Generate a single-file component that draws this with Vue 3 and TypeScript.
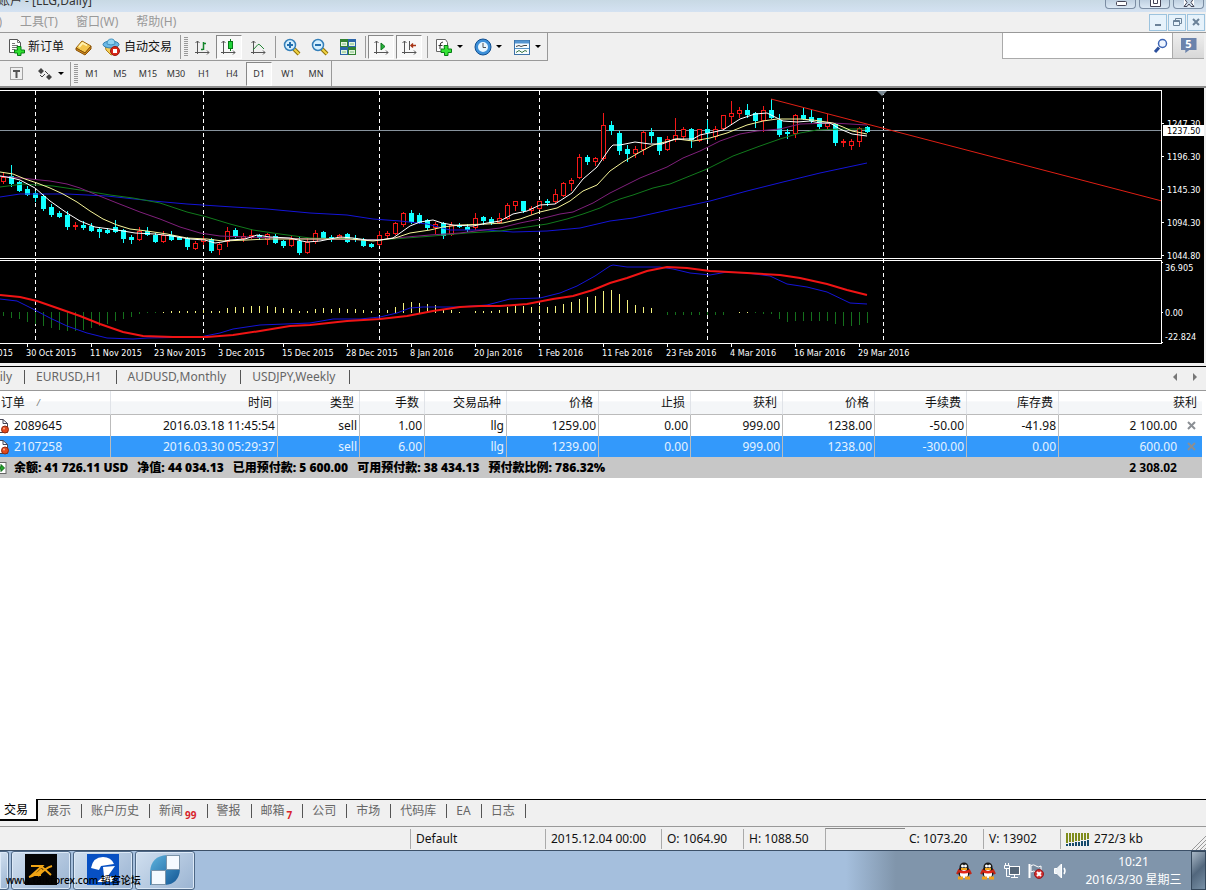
<script setup lang="ts">
import { ref } from 'vue'

type Candle = [kind: 'u' | 'd', high: number, top: number, bottom: number, low: number]

const candles: Candle[] = [
  ['u', 173, 177, 181, 183], ['d', 165, 176, 183, 186], ['d', 181, 182, 190, 191], ['d', 186, 189, 194, 195],
  ['d', 191, 193, 197, 201], ['d', 194, 196, 208, 210], ['d', 204, 207, 214, 216], ['d', 211, 213, 216, 217],
  ['d', 211, 215, 226, 229], ['u', 222, 225, 226, 229], ['d', 221, 225, 227, 229], ['d', 223, 226, 230, 231],
  ['d', 227, 229, 231, 237], ['d', 228, 230, 232, 233], ['d', 220, 227, 231, 232], ['d', 229, 230, 238, 242],
  ['d', 235, 237, 239, 243], ['u', 227, 231, 239, 240], ['d', 227, 231, 234, 235], ['d', 233, 235, 241, 242],
  ['u', 231, 235, 241, 242], ['d', 231, 235, 239, 240], ['d', 236, 237, 239, 239], ['d', 237, 238, 246, 249],
  ['u', 241, 243, 248, 249], ['u', 236, 239, 241, 244], ['d', 238, 239, 250, 252], ['u', 243, 244, 249, 254],
  ['u', 227, 231, 241, 246], ['d', 228, 230, 236, 237], ['u', 233, 236, 238, 241], ['u', 229, 235, 237, 238],
  ['d', 234, 235, 237, 239], ['u', 233, 234, 239, 244], ['d', 234, 236, 242, 243], ['d', 240, 241, 245, 247],
  ['u', 235, 239, 245, 246], ['d', 237, 241, 252, 254], ['u', 238, 242, 252, 253], ['u', 230, 233, 241, 243],
  ['d', 231, 232, 237, 237], ['d', 235, 237, 239, 241], ['u', 234, 235, 237, 238], ['d', 233, 234, 241, 242],
  ['d', 235, 238, 239, 241], ['d', 238, 239, 245, 246], ['d', 243, 244, 246, 247], ['u', 231, 235, 244, 245],
  ['u', 231, 233, 235, 238], ['u', 222, 223, 233, 234], ['u', 212, 213, 224, 226], ['d', 210, 213, 221, 223],
  ['d', 213, 215, 222, 223], ['d', 219, 220, 227, 229], ['u', 222, 224, 227, 233], ['d', 222, 223, 235, 238],
  ['u', 222, 225, 234, 235], ['d', 223, 225, 226, 227], ['d', 224, 227, 229, 231], ['u', 213, 218, 227, 229],
  ['d', 216, 217, 220, 224], ['d', 217, 219, 222, 224], ['u', 213, 218, 222, 223], ['u', 203, 205, 218, 219],
  ['u', 201, 201, 205, 210], ['d', 201, 201, 210, 212], ['u', 206, 208, 210, 214], ['u', 201, 201, 208, 209],
  ['d', 199, 201, 202, 205], ['u', 189, 194, 201, 203], ['u', 182, 183, 195, 196], ['u', 178, 180, 183, 190],
  ['u', 154, 157, 177, 178], ['d', 155, 157, 161, 164], ['u', 157, 158, 161, 165], ['u', 113, 125, 158, 160],
  ['d', 121, 125, 130, 134], ['d', 131, 133, 150, 154], ['d', 145, 149, 153, 161], ['u', 146, 149, 153, 157],
  ['u', 131, 132, 149, 154], ['d', 128, 132, 135, 142], ['d', 137, 137, 150, 154], ['u', 136, 139, 149, 150],
  ['u', 118, 135, 139, 141], ['u', 127, 129, 136, 139], ['d', 128, 129, 139, 147], ['u', 129, 129, 140, 141],
  ['d', 120, 129, 132, 139], ['u', 126, 129, 136, 139], ['u', 115, 115, 128, 129], ['u', 101, 113, 116, 123],
  ['u', 107, 110, 113, 117], ['d', 104, 110, 114, 117], ['d', 112, 113, 120, 127], ['u', 106, 110, 120, 131],
  ['d', 99, 110, 117, 118], ['d', 114, 120, 134, 136], ['d', 129, 132, 133, 138], ['u', 114, 115, 133, 137],
  ['d', 108, 115, 118, 119], ['d', 110, 117, 120, 122], ['d', 118, 118, 126, 128], ['u', 114, 123, 126, 128],
  ['d', 123, 124, 142, 145], ['u', 139, 141, 142, 146], ['u', 139, 141, 145, 149], ['u', 127, 128, 141, 146],
  ['d', 126, 127, 131, 132],
]

const histogram: number[] = [
  -4, -6, -7, -10, -12, -14, -16, -18, -19, -19, -18, -16, -14, -12, -9, -7, -5, -2, -1, -1,
  1, 2, 2, 2, 2, 3, 2, 2, 5, 6, 6, 7, 7, 7, 6, 5, 4, 2, 2, 4, 5, 4, 5, 4, 4, 3, 2, 3, 3, 6, 10, 11, 10, 9, 8, 4, 3, 1, 0,
  2, 2, 2, 3, 6, 8, 7, 6, 7, 6, 7, 9, 11, 14, 16, 17, 22, 23, 19, 13, 8, 6, 5, 0,
  -3, -3, -3, -3, -3, -3, -3, -3, 0, 1, 1, -1, -2, -2, -7, -10, -9, -9, -9, -9, -9, -12, -14, -14, -13, -11,
]

const barX = (i: number): number => 3 + i * 8

const averages: { name: string; points: string }[] = [
  { name: 'blue', points: '0,197 20,194 67,194 107,196 153,201 187,204 233,207 267,209 310,213 347,215 373,219 400,221 427,224 450,230 487,230 513,232 547,231 580,228 610,221 633,218 673,209 710,201 747,191 783,182 820,173 867,163' },
  { name: 'green', points: '0,187 23,184 53,186 80,190 110,195 133,198 160,203 187,212 207,217 230,224 253,230 280,234 310,238 350,239 380,240 433,236 467,233 500,231 527,227 547,224 567,219 583,214 600,208 610,203 620,199 633,195 653,188 670,184 707,169 733,156 760,146 780,139 800,133 817,130 840,129 867,129' },
  { name: 'purple', points: '0,176 30,179 50,181 67,184 80,188 97,195 117,203 140,212 160,219 180,227 200,233 220,236 247,237 310,239 380,240 395,238 430,235 460,233 500,228 520,223 540,219 560,214 573,212 593,203 610,193 620,188 640,178 667,167 683,158 700,151 720,141 740,134 757,131 780,129 800,124 833,123 867,125' },
  { name: 'yellow', points: '0,172 13,174 25,179 37,183 50,188 63,194 77,202 90,211 103,219 117,225 130,229 147,231 167,234 187,238 207,239 223,241 247,240 267,239 290,239 320,239 350,239 373,241 395,238 410,233 430,230 443,227 460,225 487,224 503,223 520,219 540,212 557,208 570,201 583,191 597,185 610,171 623,162 640,152 653,145 677,139 693,141 710,138 727,133 747,125 763,121 777,119 800,119 813,120 833,123 843,127 852,131 867,134' },
  { name: 'white', points: '0,176 12,178 20,180 35,188 50,201 67,213 80,221 95,227 110,229 123,231 135,233 155,234 172,236 190,239 205,240 215,243 222,242 230,240 245,239 257,235 270,237 290,238 302,241 307,242 320,241 340,237 353,238 367,240 380,240 393,238 410,226 420,222 433,220 442,223 453,225 473,226 487,223 500,221 513,214 527,211 540,205 555,204 572,193 583,179 597,167 610,148 613,145 620,145 635,142 650,144 662,144 675,139 693,139 700,135 723,130 740,119 755,114 767,113 775,117 783,121 797,122 810,121 820,123 830,123 840,129 852,134 867,136' },
]

const macdSignal = '0,295 20,297 37,301 60,309 80,316 100,324 123,332 143,336 173,337 207,337 233,335 260,331 290,326 310,325 347,321 380,319 407,316 433,311 460,307 480,306 500,306 527,304 553,299 573,296 593,290 610,283 627,278 647,271 667,267 687,268 710,271 747,273 780,275 800,278 827,284 847,290 867,295'
const macdMain = '0,299 17,301 33,309 50,318 67,326 87,333 107,338 133,339 147,338 200,337 220,333 233,329 260,325 310,323 333,319 360,319 380,317 397,313 410,308 423,307 457,307 487,305 510,299 540,298 560,293 577,286 595,276 610,266 613,265 627,267 660,267 673,269 690,273 710,275 727,272 747,273 770,276 787,284 807,287 827,292 850,303 867,304'

const separators = [35, 203, 379, 539, 707, 883]
const dates = ['30 Oct 2015', '11 Nov 2015', '23 Nov 2015', '3 Dec 2015', '15 Dec 2015', '28 Dec 2015', '8 Jan 2016',
  '20 Jan 2016', '1 Feb 2016', '11 Feb 2016', '23 Feb 2016', '4 Mar 2016', '16 Mar 2016', '29 Mar 2016']
const priceScale = [
  { y: 123, text: '1247.30' }, { y: 156, text: '1196.30' }, { y: 189, text: '1145.30' },
  { y: 222, text: '1094.30' }, { y: 255, text: '1044.80' },
]
const macdScale = [{ y: 267, text: '36.905' }, { y: 312, text: '0.00' }, { y: 336, text: '-22.824' }]

const frames = ['M1', 'M5', 'M15', 'M30', 'H1', 'H4', 'D1', 'W1', 'MN']
const frame = ref('D1')
const symbols = ['EURUSD,H1', 'AUDUSD,Monthly', 'USDJPY,Weekly']

const columns = ['时间', '类型', '手数', '交易品种', '价格', '止损', '获利', '价格', '手续费', '库存费']
const orders = [
  { id: '2089645', cells: ['2016.03.18 11:45:54', 'sell', '1.00', 'llg', '1259.00', '0.00', '999.00', '1238.00', '-50.00', '-41.98'], profit: '2 100.00' },
  { id: '2107258', cells: ['2016.03.30 05:29:37', 'sell', '6.00', 'llg', '1239.00', '0.00', '999.00', '1238.00', '-300.00', '0.00'], profit: '600.00' },
]
const selected = ref('2107258')
const totals = ['余额: 41 726.11 USD', '净值: 44 034.13', '已用预付款: 5 600.00', '可用预付款: 38 434.13', '预付款比例: 786.32%']

const panels: { name: string; count?: string }[] = [
  { name: '交易' }, { name: '展示' }, { name: '账户历史' }, { name: '新闻', count: '99' }, { name: '警报' },
  { name: '邮箱', count: '7' }, { name: '公司' }, { name: '市场' }, { name: '代码库' }, { name: 'EA' }, { name: '日志' },
]
const panel = ref('交易')
const query = ref('')
</script>

<template>
  <div class="app">
    <header class="titlebar">
      <div class="title">账户 - [LLG,Daily]</div>
      <div class="winbtns">
        <button aria-label="最小化"><svg width="14" height="10"><rect x="2.500" y="1.500" width="10" height="4" rx="1" /></svg></button>
        <button aria-label="最大化"><svg width="14" height="10"><path d="M2.500 -2V6.500H12.500V-2M5.500 -1V3.500H9.500V-1" /></svg></button>
        <button aria-label="关闭"><svg width="14" height="10"><path d="M2 6.500L5 2.500L2 -2M12 6.500L9 2.500L12 -2M2 6.500H5L7 4L9 6.500H12" /></svg></button>
      </div>
    </header>

    <nav class="menu">
      <button class="cut">)</button>
      <button>工具(T)</button>
      <button>窗口(W)</button>
      <button>帮助(H)</button>
      <div class="mdi">
        <button aria-label="最小化图表"><svg width="16" height="14"><path d="M5 10H11" stroke-width="2" /></svg></button>
        <button aria-label="还原图表"><svg width="16" height="14"><path d="M6.500 5V3.500H12.500V8.500H11M4.500 5.500H10.500V10.500H4.500ZM4.500 6.500H10.500" /></svg></button>
        <button aria-label="关闭图表"><svg width="16" height="14"><path d="M5 4L11 10M11 4L5 10" stroke-width="2" /></svg></button>
      </div>
    </nav>

    <section class="tools">
      <div class="bars">
        <div class="bar main">
          <button class="neworder">
            <svg width="18" height="18"><path d="M1.500 1.500H9.500L12.500 4.500V14.500H1.500Z" fill="#fff" stroke="#555" /><path d="M9.500 1.500V4.500H12.500M4 5.500H7M4 7.500H10M4 9.500H9M4 11.500H7" stroke="#777" fill="none" /><path d="M9 8.500H13V12H16.500V15H13V17.500H9.500V15H6.500V12H9.500Z" fill="#2fe02f" stroke="#087c16" /></svg>
            新订单
          </button>
          <button class="slot" aria-label="元编辑器">
            <svg width="18" height="18"><path d="M1 10L7 3L16 8L10 15Z" fill="#f3c54c" stroke="#99620b" /><path d="M1 10L10 15L16 8V11L10 17L1 12Z" fill="#d18b19" stroke="#89530b" /><path d="M4 9L7.500 5L12 7.500" stroke="#fff0ad" stroke-width="2" fill="none" /></svg>
          </button>
          <button class="auto">
            <svg width="20" height="18"><path d="M3 7L15 9V15L9 17L4 12Z" fill="#f4cc57" stroke="#ae8118" /><ellipse cx="9" cy="6.500" rx="8" ry="3.500" fill="#6bb8e7" stroke="#337fae" /><path d="M5 6Q5 1 9.500 1Q13 1 13 6Q9 8 5 6" fill="#91d3f3" stroke="#4191bd" /><circle cx="13" cy="13" r="4.500" fill="#d92517" stroke="#991a0d" /><rect x="11" y="11" width="4" height="4" fill="#fff" /></svg>
            自动交易
          </button>
          <i class="edge" /><i class="grip" />
          <button class="slot" aria-label="柱状图"><svg width="18" height="18"><path d="M4.500 3V16M2 14.500H16M2.500 5L4.500 3L6.500 5M14 12.500L16 14.500L14 16.500" class="axis" /><path d="M10.500 4V12M8 11.500H10M11 5.500H13" stroke="#12852a" stroke-width="1.500" /></svg></button>
          <button class="slot on" aria-label="蜡烛图"><svg width="18" height="18"><path d="M3.500 3V16M1 14.500H15M1.500 5L3.500 3L5.500 5M13 12.500L15 14.500L13 16.500" class="axis" /><path d="M10.500 1V13" stroke="#087918" /><rect x="8.500" y="3.500" width="4" height="7" fill="#20d43a" stroke="#087918" /></svg></button>
          <button class="slot" aria-label="折线图"><svg width="18" height="18"><path d="M4.500 3V16M2 14.500H16M2.500 5L4.500 3L6.500 5M14 12.500L16 14.500L14 16.500" class="axis" /><path d="M4 12L9 6.500Q10 6 11 7L15 11" stroke="#238635" fill="none" /></svg></button>
          <i class="sep" />
          <button class="slot" aria-label="放大"><svg width="18" height="18"><path d="M11 11L16 16" stroke="#8e7108" stroke-width="4" /><path d="M11 11L16 16" stroke="#f1d445" stroke-width="2" /><circle cx="7" cy="7" r="5.500" fill="#d5f0ff" stroke="#347fb9" stroke-width="1.500" /><path d="M4 7H10M7 4V10" stroke="#246fae" stroke-width="2" /></svg></button>
          <button class="slot" aria-label="缩小"><svg width="18" height="18"><path d="M11 11L16 16" stroke="#8e7108" stroke-width="4" /><path d="M11 11L16 16" stroke="#f1d445" stroke-width="2" /><circle cx="7" cy="7" r="5.500" fill="#d5f0ff" stroke="#347fb9" stroke-width="1.500" /><path d="M4 7H10" stroke="#246fae" stroke-width="2" /></svg></button>
          <button class="slot" aria-label="平铺窗口"><svg width="18" height="18"><rect x="1" y="1" width="8" height="8" fill="#318232" /><rect x="9" y="1" width="8" height="8" fill="#2c66aa" /><rect x="1" y="9" width="8" height="8" fill="#2c66aa" /><rect x="9" y="9" width="8" height="8" fill="#318232" /><path d="M2 4H8V8H2ZM10 4H16V8H10ZM2 12H8V16H2ZM10 12H16V16H10Z" fill="#e5f5df" /><path d="M3 6H7M11 6H15M3 14H7M11 14H15" stroke="#7fbb80" /></svg></button>
          <i class="sep" />
          <button class="slot on" aria-label="自动滚动"><svg width="18" height="18"><path d="M4.500 3V16M2 14.500H16M2.500 5L4.500 3L6.500 5M14 12.500L16 14.500L14 16.500" class="axis" /><path d="M9 5L13 8.500L9 12Z" fill="#23b43a" stroke="#10751e" /></svg></button>
          <button class="slot on" aria-label="图表平移"><svg width="18" height="18"><path d="M4.500 3V16M2 14.500H16M2.500 5L4.500 3L6.500 5M14 12.500L16 14.500L14 16.500M9.500 3V12" class="axis" /><path d="M11 7.500H16M13 5.500L11 7.500L13 9.500" stroke="#a73516" stroke-width="1.500" fill="none" /></svg></button>
          <i class="sep" />
          <button class="drop" aria-label="指标"><svg width="18" height="18"><path d="M1.500 1.500H10.500L12.500 4.500V13.500H1.500Z" fill="#fff" stroke="#666" /><path d="M8 4Q5 4 5 8V11M3.500 7.500H7.500" stroke="#333" fill="none" /><path d="M9 7.500H13V11H16.500V14.500H13V17.500H9.500V14.500H6V11H9.500Z" fill="#34e334" stroke="#087c16" /></svg><i class="arrow" /></button>
          <button class="drop" aria-label="周期"><svg width="18" height="18"><circle cx="9" cy="9" r="6.500" fill="#e9f7ff" stroke="#3c8fd8" stroke-width="3" /><circle cx="9" cy="9" r="8" fill="none" stroke="#114f90" /><path d="M9 5V9.500H12" stroke="#555" fill="none" /></svg><i class="arrow" /></button>
          <button class="drop" aria-label="模板"><svg width="18" height="18"><rect x="1.500" y="2.500" width="15" height="14" fill="#f7fcff" stroke="#3d72a8" /><path d="M2 4H16" stroke="#5595d0" stroke-width="3" /><path d="M2 10.500H16" stroke="#5792c3" /><path d="M3 8.500L6 7.500L8 8.500L11 7.500H14" stroke="#444" fill="none" /><path d="M3 14.500L6 12.500L9 14.500L12 12.500L14 13.500" stroke="#397642" fill="none" /></svg><i class="arrow" /></button>
        </div>
        <div class="bar frames">
          <button class="text" aria-label="文本标签"><svg width="14" height="14"><rect x="0.500" y="0.500" width="12" height="12" fill="none" stroke="#555" stroke-dasharray="1 1" /><path d="M3 4H10M6.500 4V11" stroke="#555" stroke-width="2" /></svg></button>
          <button class="drop" aria-label="箭头"><svg width="18" height="18"><path d="M2 6L5 3L8 6L5 9ZM10 12L13 9L16 12L13 15Z" fill="#444" /><path d="M4 10L6 12L9 9M9 6L12 9" stroke="#444" fill="none" /></svg><i class="arrow" /></button>
          <i class="edge" /><i class="grip" />
          <button v-for="f in frames" :key="f" class="slot tf" :class="{ on: f === frame }" @click="frame = f">{{ f }}</button>
        </div>
      </div>
      <div class="search">
        <input v-model="query" type="text" aria-label="搜索" />
        <button class="find" aria-label="查找"><svg width="16" height="16"><path d="M2 14L6 9.500" stroke="#2b4f9c" stroke-width="3" /><circle cx="9.500" cy="5.500" r="4" fill="#eef5ff" stroke="#3d65b5" stroke-width="1.500" /></svg></button>
        <button class="chat" aria-label="消息"><span>5</span></button>
      </div>
    </section>

    <section class="chart">
      <svg class="plot" height="275" role="img" aria-label="LLG 日线图">
        <g transform="translate(0 -88)">
          <g shape-rendering="crispEdges">
            <line x1="0" x2="100%" y1="130.500" y2="130.500" stroke="#87939d" />
            <line v-for="x in separators" :key="x" :x1="x + 0.5" :x2="x + 0.5" y1="91" y2="343" stroke="#fff" stroke-dasharray="4 3" />
            <g v-for="(c, i) in candles" :key="i" :class="c[0]">
              <path :d="`M${barX(i) + 0.5} ${c[1]}V${c[2]}M${barX(i) + 0.5} ${c[3]}V${c[4] + 1}`" />
              <rect :x="barX(i) - 1.5" :y="c[2] + 0.5" width="4" :height="Math.max(1, c[3] - c[2])" />
            </g>
            <rect v-for="(h, i) in histogram" :key="i" :x="barX(i)" :y="h > 0 ? 313 - h : 312" width="1" :height="Math.abs(h)" :class="h > 0 ? 'pos' : 'neg'" />
          </g>
          <polyline v-for="a in averages" :key="a.name" :points="a.points" :class="a.name" class="ma" />
          <polyline :points="macdMain" class="ma blue" />
          <polyline :points="macdSignal" class="signal" />
          <line x1="771" y1="99" x2="1932" y2="402" stroke="#df1f14" clip-path="url(#upper)" />
          <clipPath id="upper"><rect x="0" y="91" width="100%" height="167" /></clipPath>
          <path d="M877 91H887L882 96Z" fill="#788791" />
          <g shape-rendering="crispEdges" stroke="#fff">
            <line x1="0" x2="100%" y1="90.500" y2="90.500" />
            <line x1="0" x2="100%" y1="258.500" y2="258.500" />
            <line x1="0" x2="100%" y1="260.500" y2="260.500" />
            <line x1="0" x2="100%" y1="343.500" y2="343.500" />
            <line v-for="(d, i) in dates" :key="d" :x1="27.5 + i * 64" :x2="27.5 + i * 64" y1="344" y2="347" />
          </g>
          <text x="13" y="356" text-anchor="end">2015</text>
          <text v-for="(d, i) in dates" :key="d" :x="26 + i * 64" y="356">{{ d }}</text>
        </g>
      </svg>
      <svg class="scale" width="43" height="275" role="img" aria-label="价格刻度">
        <g transform="translate(0 -88)">
          <path d="M0.500 90V258.500M0.500 260V344" stroke="#fff" shape-rendering="crispEdges" />
          <g v-for="p in priceScale" :key="p.text">
            <path :d="`M1 ${p.y + 0.5}H3`" stroke="#fff" /><text x="6" :y="p.y + 4">{{ p.text }}</text>
          </g>
          <text v-for="m in macdScale" :key="m.text" x="4" :y="m.y + 4">{{ m.text }}</text>
          <path d="M1 262.500H2M1 312.500H2M1 342.500H2" stroke="#fff" />
          <rect x="2" y="125" width="41" height="11" fill="#fff" />
          <text x="6" y="134" class="now">1237.50</text>
        </g>
      </svg>
    </section>

    <nav class="symbols">
      <button class="cut">LLG,Daily</button>
      <button v-for="s in symbols" :key="s">{{ s }}</button>
      <span class="scroll">
        <button aria-label="向左"><svg width="5" height="8"><path d="M4 0V8L0 4Z" fill="#777" /></svg></button>
        <button aria-label="向右"><svg width="5" height="8"><path d="M1 0V8L5 4Z" fill="#777" /></svg></button>
      </span>
    </nav>

    <main class="terminal">
      <table>
        <colgroup>
          <col class="w-id" /><col class="w-time" /><col class="w-m" /><col class="w-s" /><col class="w-m" />
          <col v-for="n in 6" :key="n" class="w-l" /><col />
        </colgroup>
        <thead>
          <tr>
            <th class="id"><span class="order">订单 <i>/</i></span></th>
            <th v-for="(c, i) in columns" :key="i">{{ c }}</th>
            <th>获利</th>
          </tr>
        </thead>
        <tbody>
          <tr v-for="o in orders" :key="o.id" :class="{ sel: o.id === selected }" @click="selected = o.id">
            <td class="id">
              <span><svg width="14" height="16"><path d="M-4 1.500H3L7.500 5.500V14.500H-4Z" fill="#fff" stroke="#445" /><path d="M3 1.500V5.500H7.500" fill="none" stroke="#445" /><circle cx="5" cy="11.500" r="3.500" fill="#e2491c" stroke="#8f2a10" /><circle cx="4" cy="10.500" r="1" fill="#ffb08c" /></svg>{{ o.id }}</span>
            </td>
            <td v-for="(c, i) in o.cells" :key="i">{{ c }}</td>
            <td class="profit">
              <span>{{ o.profit }}<button aria-label="平仓"><svg width="9" height="9"><path d="M1 1L8 8M8 1L1 8" stroke="#8b8f94" stroke-width="2" /></svg></button></span>
            </td>
          </tr>
        </tbody>
        <tfoot>
          <tr>
            <td colspan="11" class="id">
              <span><svg width="14" height="14"><rect x="-4" y="1.500" width="10" height="11" fill="#fff" stroke="#666" /><path d="M-1 6H1V3.500L4.500 7L1 10.500V8H-1Z" fill="#23a82b" stroke="#0c6815" /></svg><b v-for="t in totals" :key="t">{{ t }}</b></span>
            </td>
            <td class="sum">2 308.02</td>
          </tr>
        </tfoot>
      </table>
    </main>

    <nav class="panels">
      <button v-for="p in panels" :key="p.name" :class="{ active: p.name === panel }" @click="panel = p.name">{{ p.name }}<sub v-if="p.count">{{ p.count }}</sub></button>
      <span class="rest" />
    </nav>

    <footer class="status">
      <span class="s-help" />
      <span class="s-profile">Default</span>
      <span class="s-date">2015.12.04 00:00</span>
      <span class="s-o">O: 1064.90</span>
      <span class="s-o">H: 1088.50</span>
      <span class="s-l" />
      <span class="s-c">C: 1073.20</span>
      <span class="s-v">V: 13902</span>
      <span class="s-net">
        <svg width="24" height="13"><path v-for="n in 8" :key="n" :d="`M${n * 3 - 2} 0V${10 - Math.floor(n / 2)}`" stroke="#7f8c1c" stroke-width="2" /><path v-for="n in 8" :key="n" :d="`M${n * 3 - 2} ${11 - Math.floor(n / 2)}V13`" stroke="#164a6c" stroke-width="2" /></svg>
        272/3 kb
      </span>
      <svg class="resize" width="14" height="14"><path d="M0 14L14 0M4 14L14 4M8 14L14 8M12 14L14 12" stroke="#999" /></svg>
    </footer>

    <footer class="taskbar">
      <div class="tasks">
        <button class="stub" aria-label="任务" />
        <button aria-label="ZX"><svg width="32" height="31"><rect width="32" height="31" fill="#050505" /><path d="M6 12H17L7 21H16M16 12L26 21M27 12Q20 14 13 22M4 23Q12 21 17 15" stroke="#f0a414" stroke-width="2" fill="none" /></svg></button>
        <button aria-label="迅投"><svg width="32" height="31"><rect width="32" height="31" fill="#0750c3" /><path d="M4 14Q6 3 16 3Q24 3 27 10L14 12L12 16ZM16 13L28 12L21 22L27 23L25 28H10L17 22Z" fill="#fff" /></svg></button>
        <button aria-label="宽带"><svg width="32" height="32"><defs><linearGradient id="leaf" x2="1" y2="1"><stop stop-color="#5fb4de" /><stop offset="1" stop-color="#125594" /></linearGradient></defs><path d="M1 31V18Q2 2 18 1H31V15Q30 30 16 31Z" fill="url(#leaf)" /><path d="M17.500 1.500H30.500V15.500H17.500ZM2.500 16.500H16.500V30.500H2.500Z" fill="#f5faff" stroke="#7b93a8" /></svg></button>
      </div>
      <div class="tray">
        <svg v-for="n in 2" :key="n" width="16" height="18"><ellipse cx="8" cy="10" rx="6" ry="6" fill="#171717" /><circle cx="8" cy="5" r="4.500" fill="#171717" /><ellipse cx="8" cy="12" rx="4" ry="4" fill="#fff" /><path d="M2 7Q8 11 14 7V10Q8 13 2 10Z" fill="#e22616" /><path d="M1 12L3 8M15 12L13 8" stroke="#c22616" stroke-width="2" /><circle cx="6.500" cy="4" r="1.500" fill="#fff" /><circle cx="9.500" cy="4" r="1.500" fill="#fff" /><path d="M5 7H11" stroke="#f5a61c" stroke-width="2" /><path d="M2 16H7M9 16H14" stroke="#f3a218" stroke-width="3" /></svg>
        <svg width="16" height="18"><rect x="5.500" y="4.500" width="10" height="8" fill="#566778" stroke="#fff" /><path d="M7 15.500H14M10.500 13V15M2.500 7V14.500H6M1.500 1V3M4.500 1V3M0.500 3.500H5.500V6.500H0.500Z" stroke="#fff" fill="none" /></svg>
        <svg width="16" height="18"><path d="M1.500 2V16" stroke="#fff" stroke-width="2" /><path d="M3 3.500Q6 2 8 4T13 4V10Q10 12 8 10T3 10Z" fill="#778ba0" stroke="#fff" /><circle cx="11" cy="12" r="4.500" fill="#d42c2c" stroke="#8c1f24" /><path d="M9 10L13 14M13 10L9 14" stroke="#fff" stroke-width="2" /></svg>
        <svg width="16" height="18"><path d="M2.500 6.500H5L9.500 2V16L5 11.500H2.500Z" fill="#eaf0f5" stroke="#fff" /><path d="M12 6Q14 9 12 12" stroke="#fff" stroke-width="1.500" fill="none" /></svg>
        <div class="clock"><time>10:21</time><time>2016/3/30 星期三</time></div>
        <button class="desktop" aria-label="显示桌面" />
      </div>
      <span class="watermark">www.talkforex.com 韬客论坛</span>
    </footer>
  </div>
</template>

<style>
body {
  margin: 0;
  background: #f0f0f0;
}
</style>

<style scoped>
.app {
  display: flex;
  flex-direction: column;
  min-height: 100vh;
  overflow: hidden;
  background: #f0f0f0;
  color: #111;
  font: 12px/16px "Noto Sans", "Noto Sans CJK SC", sans-serif;
}
.app * { box-sizing: border-box; }
button {
  font: inherit;
  color: inherit;
  background: none;
  border: 0;
  padding: 0;
  white-space: nowrap;
}
svg { display: block; flex: none; }

.titlebar {
  display: flex;
  justify-content: space-between;
  height: 12px;
  overflow: hidden;
  background: linear-gradient(#c8d9e4, #d4e2f2);
}
.title {
  display: flex;
  justify-content: flex-end;
  width: 92px;
  margin-top: -7px;
  white-space: nowrap;
  color: #333;
}
.winbtns { display: flex; gap: 3px; padding-right: 2px; }
.winbtns button {
  display: flex;
  justify-content: center;
  width: 31px;
  height: 9px;
  border: 1px solid #7b8da3;
  border-top: 0;
  border-radius: 0 0 4px 4px;
  background: linear-gradient(#bfd0e0, #dbe8f4);
}
.winbtns svg { fill: #fff; stroke: #445; }

.menu {
  display: flex;
  align-items: center;
  gap: 18px;
  height: 21px;
  border-bottom: 1px solid #999;
  color: #999;
}
.menu .cut {
  display: flex;
  justify-content: flex-end;
  width: 2px;
  overflow: hidden;
}
.mdi { display: flex; gap: 1px; margin-left: auto; padding-right: 1px; }
.mdi button {
  width: 18px;
  height: 17px;
  border: 1px solid #9cc3de;
  background: #e6f2fb;
}
.mdi svg { fill: none; stroke: #6b8299; }

.tools {
  display: flex;
  justify-content: space-between;
  height: 55px;
  border-bottom: 2px solid #8d8d8d;
}
.bar { display: flex; align-items: center; color: #111; }
.bar.main {
  height: 28px;
  border-right: 1px solid #999;
  border-bottom: 1px solid #999;
}
.bar.frames { width: 332px; height: 25px; border-right: 1px solid #999; }
.bar button { display: flex; align-items: center; height: 24px; }
.neworder { width: 70px; padding-left: 8px; gap: 2px; }
.auto { width: 82px; padding-left: 4px; gap: 2px; }
.bar .slot { justify-content: center; width: 28px; }
.bar .drop { width: 39px; padding-left: 5px; gap: 4px; }
.bar .text { width: 31px; padding-left: 10px; }
.bar .slot.on {
  width: 26px;
  margin-right: 2px;
  border: 1px solid #fff;
  border-top-color: #888;
  border-left-color: #888;
  background: #f8f8f8;
}
.bar .tf { font-size: 9px; color: #333; }
.axis { stroke: #555; fill: none; }
.edge { width: 1px; height: 24px; background: #999; }
.grip {
  width: 4px;
  height: 20px;
  margin-left: 3px;
  background: repeating-linear-gradient(#999 0 1px, #f0f0f0 1px 2px);
}
.sep { width: 6px; height: 22px; border-left: 1px solid #999; margin-left: 3px; margin-right: -3px; }
.arrow {
  border: 3px solid transparent;
  border-top-color: #000;
  border-bottom: 0;
}
.search {
  display: flex;
  width: 204px;
  height: 26px;
  padding-right: 2px;
}
.search input {
  flex: 1;
  min-width: 0;
  height: 26px;
  border: 1px solid #aaa;
  border-width: 0 0 1px 1px;
  border-radius: 0;
  background: #fff;
  outline: 0;
}
.find {
  width: 20px;
  background: #fff;
  border-right: 1px solid #aaa;
  border-bottom: 1px solid #aaa;
}
.chat {
  display: flex;
  align-items: center;
  justify-content: center;
  width: 31px;
  border-bottom: 1px solid #aaa;
  background: linear-gradient(#eee, #d8d8d8);
}
.chat span {
  width: 16px;
  height: 15px;
  background: #6b83ac;
  color: #fff;
  font-weight: 700;
  font-size: 11px;
  line-height: 12px;
  clip-path: polygon(0 0, 100% 0, 100% 80%, 55% 80%, 30% 100%, 30% 80%, 0 80%);
}

.chart {
  display: flex;
  margin-right: 2px;
  background: #000;
}
.plot { flex: 1; min-width: 0; }
.chart text {
  fill: #fff;
  font: 9px "DejaVu Sans Condensed", "DejaVu Sans", sans-serif;
}
.chart .now { fill: #000; }
.u path, .u rect { stroke: #f51818; fill: #000; }
.d path, .d rect { stroke: #1ff; fill: #1ff; }
.pos { fill: #f7f480; }
.neg { fill: #14701c; }
.ma { fill: none; stroke-width: 1; }
.blue { stroke: #1414d8; }
.green { stroke: #117a1c; }
.purple { stroke: #80207c; }
.yellow { stroke: #f7f59a; }
.white { stroke: #fff; }
.signal { fill: none; stroke: #f01414; stroke-width: 2; }

.symbols {
  display: flex;
  align-items: center;
  height: 27px;
  padding-bottom: 6px;
  border-top: 1px solid #000;
  margin-top: 3px;
  color: #666;
}
.symbols > button {
  height: 14px;
  line-height: 14px;
  padding: 0 14px 0 11px;
  border-right: 1px solid #555;
}
.symbols > .cut {
  display: flex;
  justify-content: flex-end;
  width: 25px;
  padding: 0 12px 0 0;
  overflow: hidden;
}
.scroll { display: flex; gap: 14px; margin-left: auto; padding-right: 9px; }

.terminal {
  flex: 1;
  margin-top: -3px;
  padding-right: 4px;
  border-top: 1px solid #999;
  background: #fff;
}
table {
  width: 100%;
  table-layout: fixed;
  border-collapse: separate;
  border-spacing: 0;
}
.w-id { width: 111px; }
.w-time { width: 167px; }
.w-m { width: 82px; }
.w-s { width: 65px; }
.w-l { width: 92px; }
th {
  height: 24px;
  padding: 0 5px 0 0;
  border-bottom: 1px solid #bbb;
  border-right: 1px solid #e0e3e8;
  background: linear-gradient(#fff 0 45%, #f4f6f8 46%);
  font-weight: 400;
  text-align: right;
  white-space: nowrap;
}
td {
  height: 21px;
  padding: 0 2px 0 0;
  border-right: 1px solid #bbb;
  text-align: right;
  white-space: nowrap;
  overflow: hidden;
}
tr > :last-child { border-right: 0; }
.id { text-align: left; }
.id span { display: flex; align-items: center; }
th .order { width: 40px; justify-content: flex-end; }
th.id { padding: 0; }
.order i { margin-left: 12px; font-size: 9px; color: #777; }
.sel td { background: #3399fb; color: #e6f3ff; }
.profit span { display: flex; justify-content: flex-end; align-items: center; gap: 10px; }
.profit { padding-right: 6px; }
tfoot td { background: #c7c7c7; border: 0; font-weight: 700; color: #000; }
tfoot b { margin-right: 9px; }
.sum { padding-right: 25px; }

.panels { display: flex; height: 27px; color: #666; }
.panels button {
  display: flex;
  height: 22px;
  padding: 3px 11px 0 9px;
  border-top: 1px solid #000;
  background: linear-gradient(#555, #555) right 4px / 1px 14px no-repeat;
}
.panels .active {
  width: 38px;
  padding-left: 4px;
  background: #fff;
  border: 1px solid #000;
  border-width: 0 2px 2px 0;
  color: #000;
}
.panels sub {
  margin-top: 5px;
  padding-left: 2px;
  font-size: 10px;
  line-height: 14px;
  font-weight: 700;
  color: #d8242c;
}
.rest { flex: 1; border-top: 1px solid #000; }

.status {
  display: flex;
  align-items: center;
  height: 24px;
  padding-top: 1px;
  border-top: 1px solid #999;
}
.status span {
  display: flex;
  align-items: center;
  height: 20px;
  padding-left: 5px;
  border-left: 1px solid #aaa;
  white-space: nowrap;
}
.status .s-help { flex: 0 1 410px; border: 0; }
.status .s-profile { width: 135px; }
.status .s-date { width: 116px; }
.status .s-o { width: 82px; }
.status .s-l { width: 80px; height: 22px; border-top: 1px solid #888; }
.status .s-c { width: 78px; padding-left: 4px; border-left: 0; }
.status .s-v { width: 77px; }
.status .s-net { flex: 1; gap: 4px; }
.resize { align-self: flex-end; }

.taskbar {
  position: relative;
  display: flex;
  justify-content: space-between;
  height: 40px;
  border-top: 1px solid #3c5068;
  background: linear-gradient(90deg, #a5bfdd calc(100% - 360px), #8095ab calc(100% - 310px));
}
.tasks { display: flex; gap: 2px; }
.tasks button {
  display: flex;
  justify-content: center;
  width: 60px;
  height: 39px;
  padding-top: 2px;
  border: 1px solid #4d6785;
  border-radius: 3px;
  box-shadow: inset 0 0 0 1px #dce9f7;
  background: linear-gradient(135deg, #d0dfef, #9bb4d2);
}
.tasks .stub { width: 9px; border-left: 0; border-radius: 0 3px 3px 0; }
.tray { display: flex; align-items: center; gap: 8px; color: #fff; }
.clock {
  display: flex;
  flex-direction: column;
  align-items: center;
  width: 99px;
  margin-left: 8px;
  line-height: 18px;
  white-space: nowrap;
}
.desktop {
  width: 15px;
  height: 39px;
  border: 1px solid #35485c;
  background: linear-gradient(135deg, #a9b8c6, #52677d 50%, #7890a6);
}
.watermark {
  position: absolute;
  left: 6px;
  bottom: 3px;
  font-size: 10px;
  line-height: 14px;
  font-weight: 500;
  color: #000;
}
</style>
